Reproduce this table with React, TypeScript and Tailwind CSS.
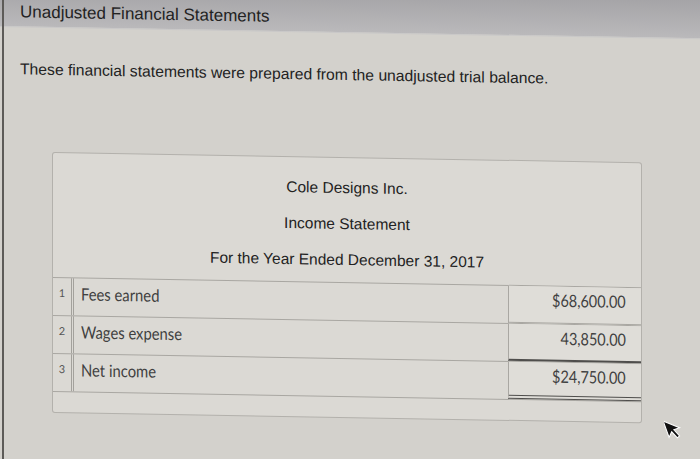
import React from "react";

const rows = [
  { n: "1", label: "Fees earned", amount: "$68,600.00", bottom: "border-b border-b-[#a9a7a2]" },
  { n: "2", label: "Wages expense", amount: "43,850.00", bottom: "border-b-2 border-b-[#4f4e4c]" },
  { n: "3", label: "Net income", amount: "$24,750.00", bottom: "border-b-4 border-double border-b-[#4f4e4c]" },
];

export default function App() {
  return (
    <div className="relative w-[700px] h-[459px] overflow-hidden bg-[#d3d1cc] font-['Liberation_Sans',Arial,sans-serif] text-[#222]">
      <div className="origin-top-left skew-y-1 -mt-[14px] flex flex-col">
        <div className="h-[41px] pt-[14px] bg-gradient-to-b from-[#a4a3a6] to-[#bab9bb] border-b border-[#c9c8c8] flex items-center pl-[20px] pb-[3px]">
          <span className="text-[17px] leading-[20px]">Unadjusted Financial Statements</span>
        </div>
        <p className="mt-[33px] pl-[20px] text-[15.7px] leading-[18px]">
          These financial statements were prepared from the unadjusted trial balance.
        </p>
        <div className="ml-[52px] mt-[73px] w-[590px] border border-[#b3b1ac] rounded-[3px] bg-[#dbd9d4] flex flex-col">
          <div className="pt-[21px] pb-[13px] flex flex-col items-center gap-[18px] text-[15.5px] leading-[18px] border-b border-[#a9a7a2]">
            <span>Cole Designs Inc.</span>
            <span>Income Statement</span>
            <span>For the Year Ended December 31, 2017</span>
          </div>
          {rows.map((r) => (
            <div key={r.n} className="h-[38px] flex border-b border-[#a9a7a2] font-['Lato',sans-serif] text-[#404040]">
              <div className="w-[21px] shrink-0 border-r-[3px] border-double border-[#a3a19c] text-[11px] text-[#555] flex justify-center pt-[7px]">
                {r.n}
              </div>
              <div className="flex-1 pl-[7px] pt-[6px] text-[17px] leading-[20px]">
                <span className="inline-block origin-left scale-x-[0.87]">{r.label}</span>
              </div>
              <div className={`w-[133px] shrink-0 border-l border-[#a9a7a2] bg-[#dfddd8] text-right pr-[15px] pt-[4px] text-[17px] leading-[20px] ${r.bottom}`}>
                <span className="inline-block origin-right scale-x-[0.85]">{r.amount}</span>
              </div>
            </div>
          ))}
          <div className="h-[20px]" />
        </div>
      </div>
      <div className="absolute left-[2px] top-0 h-full w-[2px] bg-[#5d5b58]" />
      <svg className="absolute left-[664px] top-[417px]" width="18" height="24" viewBox="0 0 16 22">
        <path d="M2 1 L2 17 L6 13 L9 20 L11.5 19 L8.5 12 L14 12 Z" fill="#111" stroke="#fff" strokeWidth="1" transform="rotate(-20 8 11)" />
      </svg>
    </div>
  );
}
